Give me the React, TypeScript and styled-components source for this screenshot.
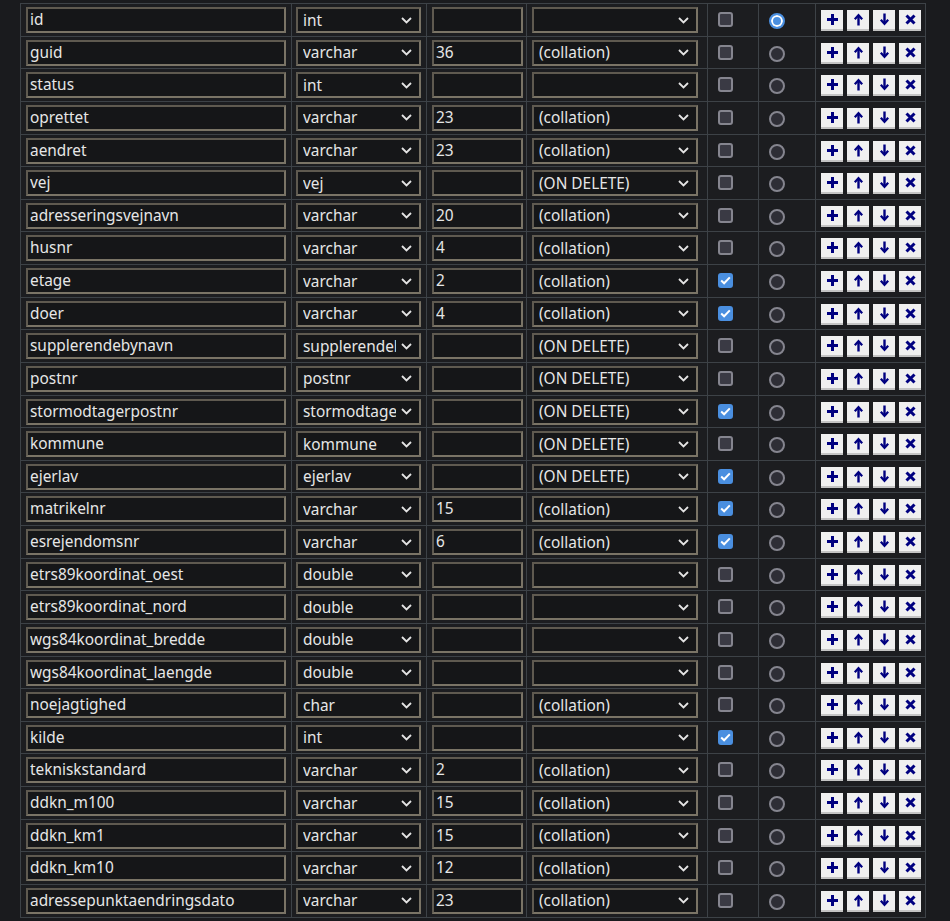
import React from "react";
import styled, { createGlobalStyle } from "styled-components";

type Field = {
    name: string;
    type: string;
    length?: string;
    options?: string;
    nullable?: boolean;
};

const fields: Field[] = [
    { name: "id", type: "int" },
    { name: "guid", type: "varchar", length: "36", options: "(collation)" },
    { name: "status", type: "int" },
    { name: "oprettet", type: "varchar", length: "23", options: "(collation)" },
    { name: "aendret", type: "varchar", length: "23", options: "(collation)" },
    { name: "vej", type: "vej", options: "(ON DELETE)" },
    { name: "adresseringsvejnavn", type: "varchar", length: "20", options: "(collation)" },
    { name: "husnr", type: "varchar", length: "4", options: "(collation)" },
    { name: "etage", type: "varchar", length: "2", options: "(collation)", nullable: true },
    { name: "doer", type: "varchar", length: "4", options: "(collation)", nullable: true },
    { name: "supplerendebynavn", type: "supplerendebynavn", options: "(ON DELETE)" },
    { name: "postnr", type: "postnr", options: "(ON DELETE)" },
    { name: "stormodtagerpostnr", type: "stormodtagerpostnr", options: "(ON DELETE)", nullable: true },
    { name: "kommune", type: "kommune", options: "(ON DELETE)" },
    { name: "ejerlav", type: "ejerlav", options: "(ON DELETE)", nullable: true },
    { name: "matrikelnr", type: "varchar", length: "15", options: "(collation)", nullable: true },
    { name: "esrejendomsnr", type: "varchar", length: "6", options: "(collation)", nullable: true },
    { name: "etrs89koordinat_oest", type: "double" },
    { name: "etrs89koordinat_nord", type: "double" },
    { name: "wgs84koordinat_bredde", type: "double" },
    { name: "wgs84koordinat_laengde", type: "double" },
    { name: "noejagtighed", type: "char", options: "(collation)" },
    { name: "kilde", type: "int", nullable: true },
    { name: "tekniskstandard", type: "varchar", length: "2", options: "(collation)" },
    { name: "ddkn_m100", type: "varchar", length: "15", options: "(collation)" },
    { name: "ddkn_km1", type: "varchar", length: "15", options: "(collation)" },
    { name: "ddkn_km10", type: "varchar", length: "12", options: "(collation)" },
    { name: "adressepunktaendringsdato", type: "varchar", length: "23", options: "(collation)" },
];

const Chevron = () => (
    <svg width="11" height="7" viewBox="0 0 11 7">
        <path d="M1 1 L5.5 5.5 L10 1" fill="none" stroke="#e4e4e4" strokeWidth="1.8" />
    </svg>
);

const icons: Record<string, React.ReactNode> = {
    add: <path d="M6.5 1 V12 M1 6.5 H12" stroke="#000080" strokeWidth="3" fill="none" />,
    up: (
        <g stroke="#000080" fill="none">
            <path d="M6.5 3 V12.5" strokeWidth="2.4" />
            <path d="M2.8 6.2 L6.5 2.2 L10.2 6.2" strokeWidth="2.2" />
        </g>
    ),
    down: (
        <g stroke="#000080" fill="none">
            <path d="M6.5 0.5 V10" strokeWidth="2.4" />
            <path d="M2.8 6.8 L6.5 10.8 L10.2 6.8" strokeWidth="2.2" />
        </g>
    ),
    remove: <path d="M2.5 2.5 L10.5 10.5 M10.5 2.5 L2.5 10.5" stroke="#000080" strokeWidth="3" fill="none" />,
};

const App: React.FC = () => (
    <>
        <GlobalStyle />
        <Page>
            <Grid>
                {fields.map((f, i) => (
                    <React.Fragment key={f.name}>
                        <Cell>
                            <TextInput width={260} defaultValue={f.name} readOnly />
                        </Cell>
                        <Cell>
                            <SelectBox width={125}>
                                <SelectText>{f.type}</SelectText>
                                <Chevron />
                            </SelectBox>
                        </Cell>
                        <Cell>
                            <TextInput width={91} defaultValue={f.length ?? ""} readOnly />
                        </Cell>
                        <Cell pad={5}>
                            <SelectBox width={166}>
                                <SelectText>{f.options ?? ""}</SelectText>
                                <Chevron />
                            </SelectBox>
                        </Cell>
                        <Cell pad={10}>
                            <Checkbox checked={!!f.nullable}>
                                {f.nullable && (
                                    <svg width="11" height="9" viewBox="0 0 11 9">
                                        <path
                                            d="M1.2 4.6 L4.1 7.3 L9.8 1.4"
                                            fill="none"
                                            stroke="#fff"
                                            strokeWidth="2"
                                        />
                                    </svg>
                                )}
                            </Checkbox>
                        </Cell>
                        <Cell pad={10}>
                            <Radio checked={i === 0} />
                        </Cell>
                        <Cell pad={5}>
                            <Actions>
                                {["add", "up", "down", "remove"].map(k => (
                                    <IconButton key={k}>
                                        <svg width="13" height="13" viewBox="0 0 13 13">
                                            {icons[k]}
                                        </svg>
                                    </IconButton>
                                ))}
                            </Actions>
                        </Cell>
                    </React.Fragment>
                ))}
            </Grid>
        </Page>
    </>
);

export default App;

/* ~~~~~~ -- styling -- ~~~~~~ */

const GlobalStyle = createGlobalStyle`
    html, body {
        margin: 0;
        padding: 0;
        background: #1a1b1e;
        overflow: hidden;
    }
    body {
        font-family: "Noto Sans", "DejaVu Sans", sans-serif;
        color: #e6e6e6;
    }
`;

const Page = styled.div`
    padding: 3px 0 0 20px;
    height: 921px;
    box-sizing: border-box;
`;

const Grid = styled.div`
    display: grid;
    grid-template-columns: 270px 134px 99px 180px 50px 56px 109px;
    grid-auto-rows: 31.63px;
    gap: 1px;
    width: fit-content;
    background: #3d4247;
    border: 1px solid #3d4247;
`;

const Cell = styled.div<{ pad?: number }>`
    background: #1c1d20;
    display: flex;
    align-items: flex-start;
    padding: 3px 0 0 ${p => p.pad ?? 4}px;
    box-sizing: border-box;
    overflow: hidden;
`;

const fieldBorder = `
    border: 2px solid;
    border-color: #5f5a50 #7a7466 #7a7466 #5f5a50;
    background: #151618;
    box-sizing: border-box;
    height: 26px;
    font-family: "Noto Sans", "DejaVu Sans", sans-serif;
    font-size: 15.4px;
    color: #e6e6e6;
`;

const TextInput = styled.input<{ width: number }>`
    ${fieldBorder}
    width: ${p => p.width}px;
    padding: 0 2px 1px;
    margin: 0 0 0 1px;
    outline: none;
`;

const SelectBox = styled.div<{ width: number }>`
    ${fieldBorder}
    width: ${p => p.width}px;
    display: flex;
    align-items: center;
    padding: 0 7px 0 5px;
    gap: 5px;
`;

const SelectText = styled.span`
    flex: 1;
    overflow: hidden;
    white-space: nowrap;
    line-height: 21px;
`;

const Checkbox = styled.span<{ checked: boolean }>`
    margin-top: 5px;
    width: 15px;
    height: 15px;
    box-sizing: border-box;
    border-radius: 3px;
    border: 2px solid ${p => (p.checked ? "#4a8fe0" : "#85858f")};
    background: ${p => (p.checked ? "#4a8fe0" : "#3a3a44")};
    display: flex;
    align-items: center;
    justify-content: center;
`;

const Radio = styled.span<{ checked: boolean }>`
    margin-top: 6px;
    width: 16px;
    height: 16px;
    box-sizing: border-box;
    border-radius: 50%;
    border: 2px solid ${p => (p.checked ? "#4a8fe0" : "#85858f")};
    background: ${p => (p.checked ? "#4a8fe0" : "#2e2e36")};
    box-shadow: ${p => (p.checked ? "inset 0 0 0 2px #fff" : "none")};
`;

const Actions = styled.div`
    display: flex;
    gap: 4px;
    margin-top: 3px;
`;

const IconButton = styled.span`
    width: 22px;
    height: 21px;
    box-sizing: border-box;
    background: #f0f0f0;
    border-bottom: 2px solid #c4c4c4;
    display: flex;
    align-items: center;
    justify-content: center;
`;
